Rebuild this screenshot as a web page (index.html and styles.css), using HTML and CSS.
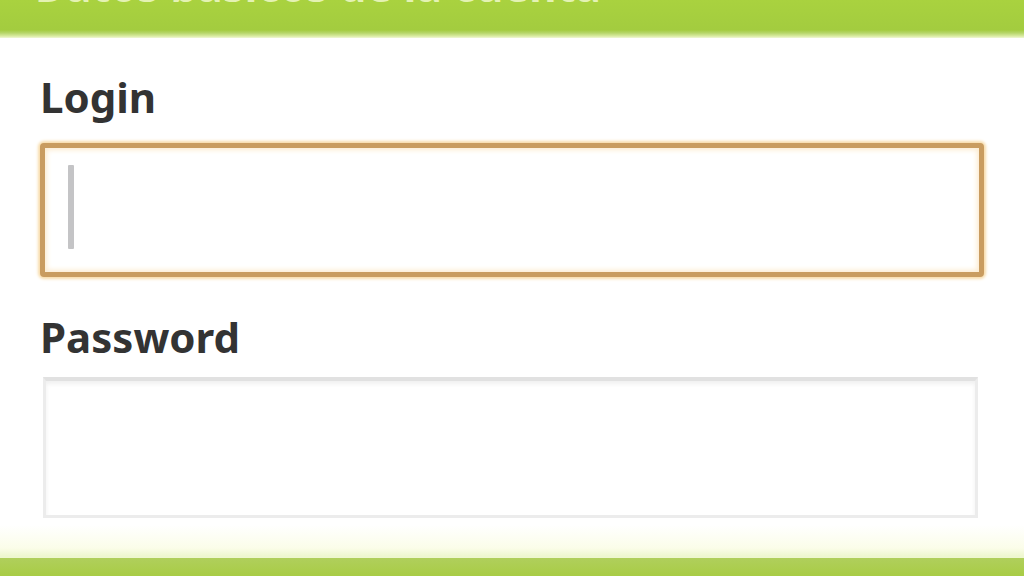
FILE: index.html
```html
<!DOCTYPE html>
<html lang="es">
<head>
<meta charset="utf-8">
<title>Datos básicos de la cuenta</title>
<link rel="stylesheet" href="styles.css">
</head>
<body>
<div class="screen">
  <header class="topbar">
    <h1 class="title">Datos básicos de la cuenta</h1>
  </header>
  <main class="form">
    <label class="label label-login">Login</label>
    <div class="field field-focus"><span class="caret"></span></div>
    <label class="label label-pass">Password</label>
    <div class="field field-idle"></div>
  </main>
  <footer class="bottombar"></footer>
</div>
</body>
</html>
```
FILE: styles.css
```css
html, body {
  margin: 0;
  padding: 0;
  background: #ffffff;
  font-family: "Noto Sans", "Open Sans", "DejaVu Sans", sans-serif;
}
.screen {
  width: 1024px;
  height: 576px;
  overflow: hidden;
  display: grid;
  grid-template-rows: 38px 1fr 18px;
  background: linear-gradient(#fdfdf3 0px, #ffffff 40px, #ffffff 525px, #fbfde9 548px, #eef7cf 556px);
}
.topbar {
  background: linear-gradient(#a9d23f, #a3cc3f 30px, #b6d66a 33px, #d8ea9f 36px, #f0f7d6 38px);
  overflow: hidden;
}
.title {
  margin: -35px 0 0 35px;
  font-size: 42px;
  line-height: 42px;
  font-weight: 700;
  color: #e4f2b4;
  letter-spacing: 0.5px;
  white-space: nowrap;
}
.form {
  display: flex;
  flex-direction: column;
  padding: 34px 40px 0 40px;
}
.label {
  display: block;
  font-size: 42px;
  line-height: 50px;
  font-weight: 700;
  color: #333333;
}
.label-pass {
  margin-top: 35px;
}
.field {
  box-sizing: border-box;
  background: #ffffff;
}
.field-focus {
  margin-top: 21px;
  height: 134px;
  border: 5px solid #c99c60;
  border-radius: 4px;
  box-shadow: 0 0 3px 2px #f8dcaa, inset 0 0 5px 2px #fcebcf;
  padding: 17px 0 0 23px;
}
.caret {
  display: block;
  width: 6px;
  height: 84px;
  background: #c4c4c6;
  border-radius: 1px;
}
.field-idle {
  margin: 15px 6px 0 3px;
  height: 141px;
  border: 3px solid #ececec;
  border-top: 4px solid #e1e1e1;
  box-shadow: inset 0 3px 4px #f0f0f0;
}
.bottombar {
  background: linear-gradient(#b0cf5c, #a8cc45);
}
```
